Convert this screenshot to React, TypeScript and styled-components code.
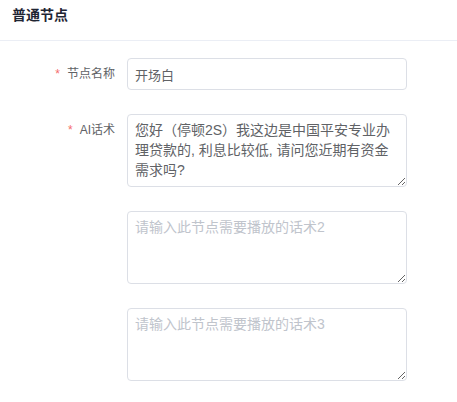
import React from 'react';
import styled, { createGlobalStyle } from 'styled-components';

const GlobalStyle = createGlobalStyle`
  html, body {
    margin: 0;
    padding: 0;
    background: #ffffff;
  }
  body {
    font-family: "Liberation Sans", "Noto Sans CJK SC", sans-serif;
  }
  * {
    box-sizing: border-box;
  }
`;

const Panel = styled.div`
  width: 457px;
  min-height: 402px;
  background: #ffffff;
`;

const Header = styled.div`
  height: 41px;
  padding: 5px 12px 0;
  border-bottom: 1px solid #ebeef5;
  font-size: 14px;
  line-height: 20px;
  font-weight: bold;
  color: #1f2533;
`;

const Form = styled.div`
  padding-top: 17px;
  display: flex;
  flex-direction: column;
  gap: 24px;
`;

const Item = styled.div`
  display: flex;
  align-items: flex-start;
`;

const Label = styled.label`
  width: 127px;
  padding-right: 12px;
  text-align: right;
  font-size: 12px;
  line-height: 32px;
  color: #606266;
  white-space: nowrap;
`;

const Star = styled.span`
  color: #f56c6c;
  margin-right: 7px;
  font-size: 12px;
`;

const Input = styled.input`
  width: 280px;
  height: 32px;
  padding: 0 7px;
  border: 1px solid #dcdfe6;
  border-radius: 4px;
  font-family: inherit;
  font-size: 13px;
  color: #606266;
  outline: none;
`;

const TextArea = styled.textarea`
  width: 280px;
  height: 73px;
  padding: 5px 7px;
  border: 1px solid #dcdfe6;
  border-radius: 4px;
  font-family: inherit;
  font-size: 14px;
  line-height: 20px;
  color: #606266;
  resize: vertical;
  outline: none;

  &::placeholder {
    color: #c0c4cc;
  }
`;

const scripts = [
  { label: 'AI话术', value: '您好（停顿2S）我这边是中国平安专业办理贷款的, 利息比较低, 请问您近期有资金需求吗?', placeholder: '' },
  { label: '', value: '', placeholder: '请输入此节点需要播放的话术2' },
  { label: '', value: '', placeholder: '请输入此节点需要播放的话术3' },
];

export default function App() {
  return (
    <Panel>
      <GlobalStyle />
      <Header>普通节点</Header>
      <Form>
        <Item>
          <Label><Star>*</Star>节点名称</Label>
          <Input defaultValue="开场白" />
        </Item>
        {scripts.map((s, i) => (
          <Item key={i}>
            <Label>{s.label && <><Star>*</Star>{s.label}</>}</Label>
            <TextArea defaultValue={s.value} placeholder={s.placeholder} />
          </Item>
        ))}
      </Form>
    </Panel>
  );
}
